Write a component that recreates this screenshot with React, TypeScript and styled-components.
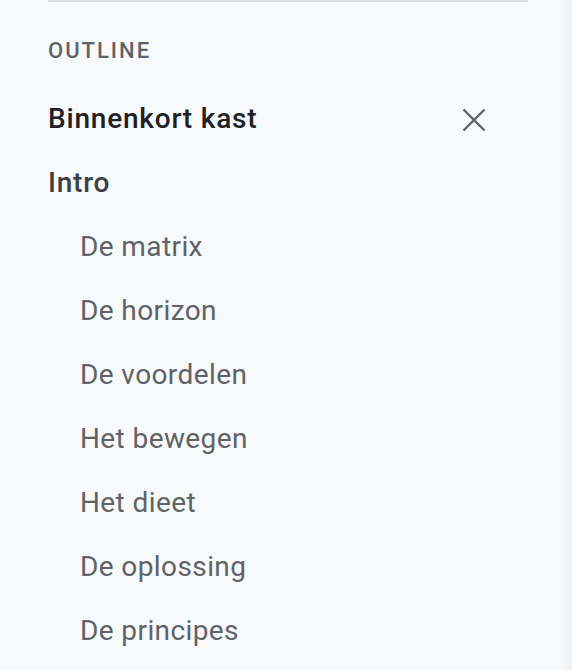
import React from "react";
import styled, { createGlobalStyle } from "styled-components";

const Global = createGlobalStyle`
  html, body { margin: 0; padding: 0; background: #f8f9fa; }
  body { font-family: Roboto, "Noto Sans", Arial, sans-serif; }
`;

const Panel = styled.div`
  width: 572px;
  height: 670px;
  box-sizing: border-box;
  background: linear-gradient(to right, #f8f9fa 0, #f8f9fa 562px, #eef0f2 572px);
  padding: 0 44px 0 48px;
  overflow: hidden;
`;

const Divider = styled.div`
  height: 2px;
  background: #dadce0;
  width: 480px;
`;

const Title = styled.div`
  margin-top: 36px;
  font-size: 22px;
  font-weight: 500;
  letter-spacing: 2px;
  color: #5f6368;
  line-height: 26px;
`;

const List = styled.div`
  margin-top: 22px;
  display: flex;
  flex-direction: column;
`;

const Row = styled.div<{ $level: number; $tone?: string }>`
  height: 64px;
  display: flex;
  align-items: center;
  padding-left: ${(p) => p.$level * 32}px;
  font-size: 28px;
  letter-spacing: ${(p) => (p.$level === 0 ? 0.8 : 0.4)}px;
  font-weight: ${(p) => (p.$level === 0 ? 500 : 400)};
  color: ${(p) => p.$tone ?? (p.$level === 0 ? "#3c4043" : "#5f6368")};
`;

const Label = styled.span`
  flex: 1;
`;

const Close = styled.button`
  width: 40px;
  height: 40px;
  border: 0;
  background: transparent;
  padding: 0;
  margin-right: 34px;
  margin-top: 3px;
  display: flex;
  align-items: center;
  justify-content: center;
  color: #5f6368;
`;

const items: { text: string; level: number }[] = [
  { text: "Intro", level: 0 },
  { text: "De matrix", level: 1 },
  { text: "De horizon", level: 1 },
  { text: "De voordelen", level: 1 },
  { text: "Het bewegen", level: 1 },
  { text: "Het dieet", level: 1 },
  { text: "De oplossing", level: 1 },
  { text: "De principes", level: 1 },
];

export default function App() {
  return (
    <Panel>
      <Global />
      <Divider />
      <Title>OUTLINE</Title>
      <List>
        <Row $level={0} $tone="#202124">
          <Label>Binnenkort kast</Label>
          <Close aria-label="Sluiten">
            <svg width="28" height="28" viewBox="0 0 24 24">
              <path d="M3 3 L21 21 M21 3 L3 21" stroke="currentColor" strokeWidth="2.1" fill="none" />
            </svg>
          </Close>
        </Row>
        {items.map((it) => (
          <Row key={it.text} $level={it.level}>
            <Label>{it.text}</Label>
          </Row>
        ))}
      </List>
    </Panel>
  );
}
